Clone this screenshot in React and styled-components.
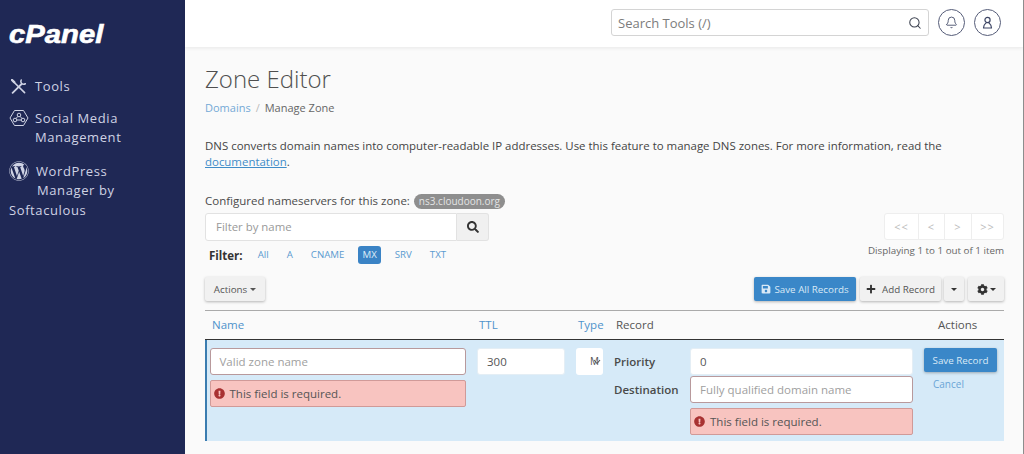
import styled, { createGlobalStyle } from "styled-components";
import { Search, Bell } from "lucide-react";
import {
  FaWordpress,
  FaSave,
  FaPlus,
  FaCog,
  FaExclamationCircle,
  FaSearch,
} from "react-icons/fa";

const GlobalStyle = createGlobalStyle`
  * { box-sizing: border-box; }
  html, body {
    margin: 0;
    height: 100%;
    overflow: hidden;
    font-family: "Open Sans", "Liberation Sans", sans-serif;
    font-size: 11.5px;
    color: #4a4a4a;
  }
`;

const Page = styled.div`
  display: flex;
  width: 1024px;
  height: 454px;
  background: #fafafa;
  border-right: 1px solid #8d8d8d;
  overflow: hidden;
`;

const Sidebar = styled.aside`
  flex: 0 0 185px;
  background: #1f2855;
  color: #cfd3e4;
  padding: 21px 9px 0;
`;

const Logo = styled.div`
  width: max-content;
  font-family: "Liberation Sans", sans-serif;
  font-size: 25px;
  line-height: 27px;
  font-weight: 700;
  font-style: italic;
  color: #fff;
  -webkit-text-stroke: 0.6px #fff;
  transform: scaleX(1.17);
  transform-origin: left center;
  margin-bottom: 29px;
`;

const NavItem = styled.div`
  font-size: 13px;
  line-height: 19.6px;
  letter-spacing: 0.6px;
  margin-bottom: ${(p) => p.$after ?? 13}px;
  svg {
    display: inline-block;
    vertical-align: middle;
    margin: -4px ${(p) => p.$gap || 7}px -2px ${(p) => p.$before || 0}px;
  }
`;

const NavIndent = styled.span`
  display: block;
  padding-left: ${(p) => p.$left}px;
`;

const Main = styled.div`
  flex: 1;
  min-width: 0;
  display: flex;
  flex-direction: column;
`;

const Header = styled.header`
  flex: 0 0 47px;
  background: #fff;
  box-shadow: 0 1px 4px rgba(0, 0, 0, 0.08);
  display: flex;
  align-items: center;
  justify-content: flex-end;
  padding: 0 22px 2px 0;
  gap: 9px;
`;

const SearchBox = styled.div`
  width: 318px;
  height: 27px;
  border: 1px solid #d4d4d4;
  border-radius: 3px;
  display: flex;
  align-items: center;
  justify-content: space-between;
  padding: 0 6px;
  font-size: 13px;
  color: #7c7c7c;
  svg { color: #3c4250; }
`;

const RoundButton = styled.div`
  width: 27px;
  height: 27px;
  border: 1px solid #555c78;
  border-radius: 50%;
  display: flex;
  align-items: center;
  justify-content: center;
  color: #3d4564;
`;

const Content = styled.main`
  flex: 1;
  padding: 17px 19px 0 20px;
`;

const Title = styled.h1`
  margin: 0;
  font-size: 24px;
  line-height: 30px;
  font-weight: 300;
  color: #4f4f4f;
`;

const Breadcrumb = styled.div`
  margin-top: 6px;
  font-size: 11px;
  line-height: 16px;
  color: #666;
  span { color: #bbb; margin: 0 5px; }
`;

const LinkText = styled.a`
  color: #74a9d6;
`;

const Intro = styled.p`
  margin: 22px 0 0;
  font-size: 11.45px;
  line-height: 15.5px;
  color: #444;
  a { text-decoration: underline; color: #3f8cc8; }
`;

const Toolbar = styled.div`
  display: flex;
  justify-content: space-between;
  margin-top: 23px;
`;

const ToolColumn = styled.div`
  display: flex;
  flex-direction: column;
  align-items: ${(p) => p.$align || "flex-start"};
`;

const ZoneLine = styled.div`
  font-size: 11.5px;
  line-height: 18px;
  color: #4a4a4a;
  display: flex;
  align-items: center;
  gap: 4px;
`;

const Badge = styled.span`
  background: #8e8e8e;
  color: #e4e4e4;
  border-radius: 8px;
  font-size: 10px;
  line-height: 15px;
  padding: 0 5px;
`;

const FilterGroup = styled.div`
  display: flex;
  width: 284px;
  height: 28px;
  margin-top: 3px;
`;

const FilterInput = styled.div`
  flex: 1;
  background: #fff;
  border: 1px solid #e2e2e2;
  border-radius: 3px 0 0 3px;
  padding-left: 10px;
  font-size: 11.4px;
  line-height: 26px;
  color: #999;
`;

const FilterButton = styled.div`
  width: 32px;
  background: #f0f0f0;
  border: 1px solid #e2e2e2;
  border-left: none;
  border-radius: 0 3px 3px 0;
  display: flex;
  align-items: center;
  justify-content: center;
  color: #333;
`;

const FilterRow = styled.div`
  display: flex;
  align-items: center;
  height: 18px;
  margin-top: 5px;
  margin-left: 4px;
  font-size: 9.7px;
`;

const FilterLabel = styled.strong`
  font-size: 11.5px;
  color: #333;
  margin-right: 11px;
`;

const FilterTab = styled.span`
  padding: 0 4px;
  line-height: 18px;
  margin-right: 10px;
  border-radius: 3px;
  color: ${(p) => (p.$active ? "#dcecf8" : "#5b9bd0")};
  background: ${(p) => (p.$active ? "#3a83c5" : "transparent")};
`;

const ButtonBase = styled.div`
  height: 24px;
  display: flex;
  align-items: center;
  border-radius: 2px;
  font-size: 9.8px;
  background: #f1f1f1;
  color: #555;
  box-shadow: 0 1px 3px rgba(0, 0, 0, 0.28);
`;

const ActionsButton = styled(ButtonBase)`
  margin-top: 13px;
  width: 60px;
  justify-content: center;
  gap: 3px;
`;

const Caret = styled.i`
  display: inline-block;
  border-top: 3px solid currentColor;
  border-left: 3px solid transparent;
  border-right: 3px solid transparent;
`;

const Pager = styled.div`
  display: flex;
  height: 27px;
  width: 120px;
  margin-top: 21px;
  background: #fff;
  border: 1px solid #eee;
  border-radius: 3px;
`;

const PagerCell = styled.div`
  flex: 0 0 ${(p) => p.$w}px;
  display: flex;
  align-items: center;
  justify-content: center;
  font-size: 11px;
  letter-spacing: 1px;
  color: #bbb;
  border-left: ${(p) => (p.$first ? "none" : "1px solid #eee")};
`;

const Displaying = styled.div`
  margin-top: 4px;
  font-size: 9.8px;
  line-height: 14px;
  color: #666;
`;

const ButtonRow = styled.div`
  display: flex;
  margin-top: 19px;
`;

const PrimaryButton = styled(ButtonBase)`
  background: #3a87c8;
  color: #d9e9f6;
  width: 102px;
  justify-content: center;
  gap: 3px;
  margin-right: 4px;
`;

const AddButton = styled(ButtonBase)`
  width: 81px;
  justify-content: center;
  gap: 6px;
  svg { color: #333; }
`;

const SplitButton = styled(ButtonBase)`
  width: 20px;
  justify-content: center;
  margin: 0 4px 0 3px;
  color: #333;
`;

const CogButton = styled(ButtonBase)`
  width: 36px;
  justify-content: center;
  gap: 2px;
  color: #333;
`;

const Table = styled.div`
  margin-top: 9px;
  border-top: 1px solid #aaa;
`;

const HeadRow = styled.div`
  display: grid;
  grid-template-columns: 266px 100px 43px 1fr 86px;
  height: 29px;
  padding-bottom: 2px;
  align-items: center;
  font-size: 11.5px;
  border-bottom: 1px solid #333;
`;

const HeadCell = styled.div`
  padding-left: ${(p) => p.$pad ?? 7}px;
  color: ${(p) => (p.$link ? "#4f93cb" : "#555")};
`;

const EditRow = styled.div`
  display: grid;
  grid-template-columns: 264px 100px 35px 1fr 86px;
  height: 101px;
  background: #d6eaf8;
  border-left: 2px solid #3a7cb0;
  padding-top: 8px;
`;

const FieldCell = styled.div`
  padding-left: ${(p) => p.$pad ?? 2}px;
  padding-right: ${(p) => p.$right ?? 0}px;
`;

const TextField = styled.div`
  height: 27px;
  background: #fff;
  border-radius: 3px;
  border: 1px solid ${(p) => (p.$error ? "#b8999c" : "#e4eef5")};
  font-size: 11.5px;
  line-height: 25px;
  padding-left: 9px;
  color: ${(p) => (p.$value ? "#555" : "#a0a0a0")};
`;

const ErrorBox = styled.div`
  height: 27px;
  margin-top: 5px;
  background: #f8c4c0;
  border: 1px solid #d09a98;
  border-radius: 2px;
  display: flex;
  align-items: center;
  gap: 5px;
  padding-left: 3px;
  font-size: 11.5px;
  color: #555;
  svg { color: #a83232; }
`;

const TypeSelect = styled.div`
  position: relative;
  width: 26.5px;
  height: 27px;
  background: #fff;
  border-radius: 3px;
  overflow: hidden;
  font-size: 10px;
  line-height: 27px;
  padding-left: 14px;
  color: #555;
  white-space: nowrap;
  svg {
    position: absolute;
    right: 2px;
    top: 11px;
    color: #555;
  }
`;

const RecordCell = styled.div`
  display: grid;
  grid-template-columns: 76px 223px;
  grid-auto-rows: min-content;
  row-gap: 1px;
  padding-left: 8px;
  font-size: 11.5px;
`;

const RecordLabel = styled.div`
  font-weight: 600;
  color: #4a4a4a;
  line-height: 27px;
`;

const RecordErrorSlot = styled.div`
  grid-column: 2;
  margin-top: -1px;
`;

const ActionCell = styled.div`
  padding-left: 6px;
`;

const SaveButton = styled(ButtonBase)`
  background: #3a87c8;
  color: #d9e9f6;
  width: 73px;
  justify-content: center;
`;

const CancelLink = styled.div`
  margin: 5px 0 0 9px;
  font-size: 10px;
  line-height: 14px;
  color: #6aa5d6;
`;

function ToolsIcon() {
  return (
    <svg width="15" height="15" viewBox="0 0 15 15" fill="none" stroke="currentColor" strokeWidth="1.6" strokeLinecap="round">
      <path d="M2 2.2 L13.6 13.6" />
      <path d="M1 1 L3.2 3.2" strokeWidth="2.4" />
      <path d="M10.6 5 L1.6 13.8" strokeWidth="1.8" />
      <path d="M10.2 1 C9 3.8 11.4 6.2 14.4 4.8" strokeWidth="1.5" />
    </svg>
  );
}

function SocialIcon() {
  return (
    <svg width="20" height="20" viewBox="0 0 20 20" fill="none" stroke="currentColor" strokeWidth="1">
      <path d="M5.5 2.5 H14.5 L19 10 L14.5 17.5 H5.5 L1 10 Z" />
      <circle cx="10" cy="7" r="1.8" />
      <circle cx="6" cy="12" r="1.8" />
      <circle cx="14" cy="12" r="1.8" />
      <path d="M8.8 8.4 L7 10.6 M11.2 8.4 L13 10.6 M7.8 12 H12.2" />
    </svg>
  );
}

function UserIcon() {
  return (
    <svg width="13" height="13" viewBox="0 0 13 13" fill="none" stroke="currentColor" strokeWidth="1.2" strokeLinecap="round">
      <circle cx="6.5" cy="4" r="2.6" />
      <path d="M2.5 12 C2.5 8.5 4.5 7.5 5.2 6.8 M10.5 12 C10.5 8.5 8.5 7.5 7.8 6.8 M2.5 12 H10.5" />
    </svg>
  );
}

function App() {
  return (
    <>
      <GlobalStyle />
      <Page>
        <Sidebar>
          <Logo>cPanel</Logo>
          <NavItem $before={2} $gap={9} $after={12}>
            <ToolsIcon />
            Tools
          </NavItem>
          <NavItem $gap={6} $after={14}>
            <SocialIcon />
            Social Media
            <NavIndent $left={26}>Management</NavIndent>
          </NavItem>
          <NavItem $gap={7}>
            <FaWordpress size={20} />
            WordPress
            <NavIndent $left={28}>Manager by</NavIndent>
            Softaculous
          </NavItem>
        </Sidebar>
        <Main>
          <Header>
            <SearchBox>
              Search Tools (/)
              <Search size={14} strokeWidth={1.8} />
            </SearchBox>
            <RoundButton>
              <Bell size={13} strokeWidth={1.6} />
            </RoundButton>
            <RoundButton>
              <UserIcon />
            </RoundButton>
          </Header>
          <Content>
            <Title>Zone Editor</Title>
            <Breadcrumb>
              <LinkText>Domains</LinkText>
              <span>/</span>Manage Zone
            </Breadcrumb>
            <Intro>
              DNS converts domain names into computer-readable IP addresses. Use this feature to manage DNS zones. For more information, read the <a>documentation</a>.
            </Intro>
            <Toolbar>
              <ToolColumn>
                <ZoneLine>
                  Configured nameservers for this zone:
                  <Badge>ns3.cloudoon.org</Badge>
                </ZoneLine>
                <FilterGroup>
                  <FilterInput>Filter by name</FilterInput>
                  <FilterButton>
                    <FaSearch size={12} />
                  </FilterButton>
                </FilterGroup>
                <FilterRow>
                  <FilterLabel>Filter:</FilterLabel>
                  <FilterTab>All</FilterTab>
                  <FilterTab>A</FilterTab>
                  <FilterTab>CNAME</FilterTab>
                  <FilterTab $active>MX</FilterTab>
                  <FilterTab>SRV</FilterTab>
                  <FilterTab>TXT</FilterTab>
                </FilterRow>
                <ActionsButton>
                  Actions <Caret />
                </ActionsButton>
              </ToolColumn>
              <ToolColumn $align="flex-end">
                <Pager>
                  <PagerCell $first $w={33}>&lt;&lt;</PagerCell>
                  <PagerCell $w={26}>&lt;</PagerCell>
                  <PagerCell $w={27}>&gt;</PagerCell>
                  <PagerCell $w={32}>&gt;&gt;</PagerCell>
                </Pager>
                <Displaying>Displaying 1 to 1 out of 1 item</Displaying>
                <ButtonRow>
                  <PrimaryButton>
                    <FaSave size={10} />
                    Save All Records
                  </PrimaryButton>
                  <AddButton>
                    <FaPlus size={10} />
                    Add Record
                  </AddButton>
                  <SplitButton>
                    <Caret />
                  </SplitButton>
                  <CogButton>
                    <FaCog size={11} />
                    <Caret />
                  </CogButton>
                </ButtonRow>
              </ToolColumn>
            </Toolbar>
            <Table>
              <HeadRow>
                <HeadCell $link>Name</HeadCell>
                <HeadCell $link $pad={8}>TTL</HeadCell>
                <HeadCell $link $pad={7}>Type</HeadCell>
                <HeadCell $pad={2}>Record</HeadCell>
                <HeadCell $pad={20}>Actions</HeadCell>
              </HeadRow>
              <EditRow>
                <FieldCell $pad={2.5} $right={5.5}>
                  <TextField $error>Valid zone name</TextField>
                  <ErrorBox>
                    <FaExclamationCircle size={11} />
                    This field is required.
                  </ErrorBox>
                </FieldCell>
                <FieldCell $pad={6} $right={6}>
                  <TextField $value>300</TextField>
                </FieldCell>
                <FieldCell $pad={5}>
                  <TypeSelect>
                    M
                    <svg width="8" height="6" viewBox="0 0 8 6" fill="none" stroke="currentColor" strokeWidth="1.1">
                      <path d="M1 1 L4 4.5 L7 1" />
                    </svg>
                  </TypeSelect>
                </FieldCell>
                <RecordCell>
                  <RecordLabel>Priority</RecordLabel>
                  <TextField $value>0</TextField>
                  <RecordLabel>Destination</RecordLabel>
                  <TextField $error>Fully qualified domain name</TextField>
                  <RecordErrorSlot>
                    <ErrorBox>
                      <FaExclamationCircle size={11} />
                      This field is required.
                    </ErrorBox>
                  </RecordErrorSlot>
                </RecordCell>
                <ActionCell>
                  <SaveButton>Save Record</SaveButton>
                  <CancelLink>Cancel</CancelLink>
                </ActionCell>
              </EditRow>
            </Table>
          </Content>
        </Main>
      </Page>
    </>
  );
}

export default App;
